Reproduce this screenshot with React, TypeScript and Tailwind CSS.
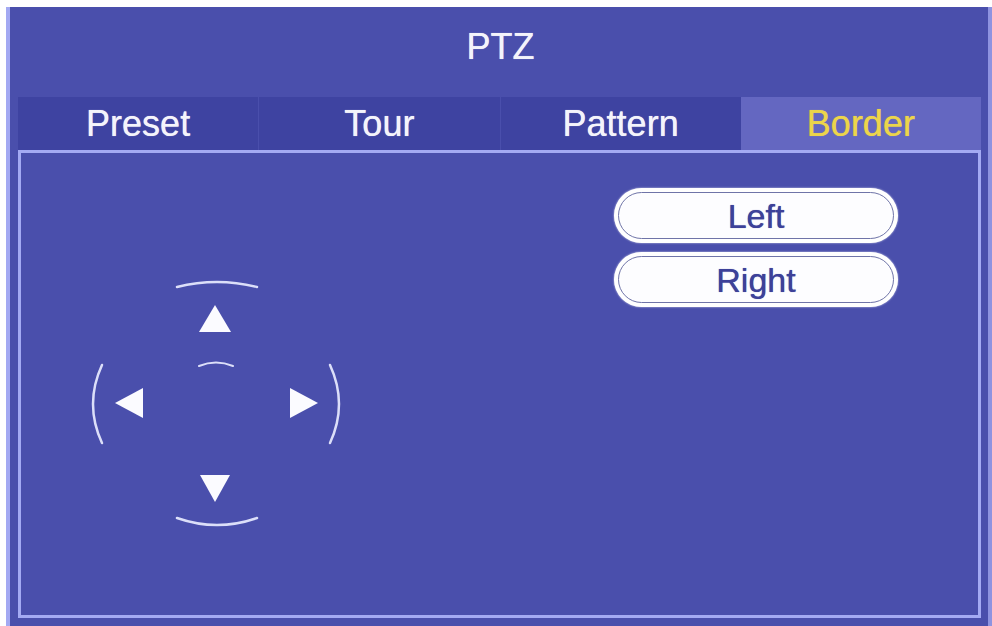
import React from "react";

const tabs = ["Preset", "Tour", "Pattern", "Border"];

function PillButton({ label }: { label: string }) {
  return (
    <div className="h-[55px] w-[284px] rounded-full bg-white p-[4px] shadow-[0_0_2px_rgba(255,255,255,0.8)]">
      <div className="flex h-full w-full items-center justify-center rounded-full border-[1.5px] border-[#6f74a8] bg-[#fdfdff]">
        <span className="text-[34px] leading-none text-[#3d4199] [text-shadow:0_0_0.7px_#3d4199]">{label}</span>
      </div>
    </div>
  );
}

function DirectionPad() {
  const stroke = "#dcdff9";
  return (
    <svg width="270" height="262" viewBox="80 272 270 262" fill="none">
      <path d="M177 287 Q217 277 257 287" stroke={stroke} strokeWidth="2.5" strokeLinecap="round" />
      <path d="M199 366 Q216 359 233 366" stroke={stroke} strokeWidth="2" strokeLinecap="round" />
      <path d="M102 365 Q84 404 102 443" stroke={stroke} strokeWidth="2.5" strokeLinecap="round" />
      <path d="M330 365 Q348 404 330 443" stroke={stroke} strokeWidth="2.5" strokeLinecap="round" />
      <path d="M177 518 Q217 532 257 518" stroke={stroke} strokeWidth="2.5" strokeLinecap="round" />
      <polygon points="215,305 199,332 231,332" fill="#fbfbff" />
      <polygon points="115,403 143,388 143,418" fill="#fbfbff" />
      <polygon points="318,403 290,388 290,418" fill="#fbfbff" />
      <polygon points="200,475 230,475 215,502" fill="#fbfbff" />
    </svg>
  );
}

export default function App() {
  return (
    <div
      className="h-[626px] w-[992px] overflow-hidden bg-white pl-[6px] pt-[7px]"
      style={{ fontFamily: '"Liberation Sans", Arial, sans-serif' }}
    >
      <div className="flex h-[619px] w-[986px] flex-col border-l-[4px] border-r-[4px] border-l-[#a3a9f2] border-r-[#8e93e0] bg-[#4a4fac] pl-[8px] pr-[5px]">
        {/* Title bar */}
        <div className="flex h-[90px] items-center justify-center pb-[11px]">
          <span className="text-[36px] leading-none text-[#f4f4fb] [text-shadow:0_0_0.7px_#f4f4fb]">PTZ</span>
        </div>

        {/* Tabs */}
        <div className="flex h-[53px] w-[963px]">
          {tabs.map((t, i) => {
            const active = t === "Border";
            return (
              <div
                key={t}
                className={
                  active
                    ? "flex flex-1 items-center justify-center bg-[#6467c1]"
                    : i > 0
                      ? "flex flex-1 items-center justify-center border-l border-[#4a4fac] bg-[#3e43a1]"
                      : "flex flex-1 items-center justify-center bg-[#3e43a1]"
                }
              >
                <span
                  className={
                    active
                      ? "text-[36px] leading-none text-[#ecd54b] [text-shadow:0_0_0.7px_#ecd54b]"
                      : "text-[36px] leading-none text-[#f4f4fb] [text-shadow:0_0_0.7px_#f4f4fb]"
                  }
                >
                  {t}
                </span>
              </div>
            );
          })}
        </div>

        {/* Content panel */}
        <div className="flex h-[468px] w-[963px] items-start border-[3px] border-[#a4aaf3] bg-[#4a4fac]">
          <div className="ml-[59px] mt-[119px]">
            <DirectionPad />
          </div>
          <div className="ml-auto mr-[80px] mt-[35px] flex flex-col gap-[9px]">
            <PillButton label="Left" />
            <PillButton label="Right" />
          </div>
        </div>
      </div>
    </div>
  );
}
